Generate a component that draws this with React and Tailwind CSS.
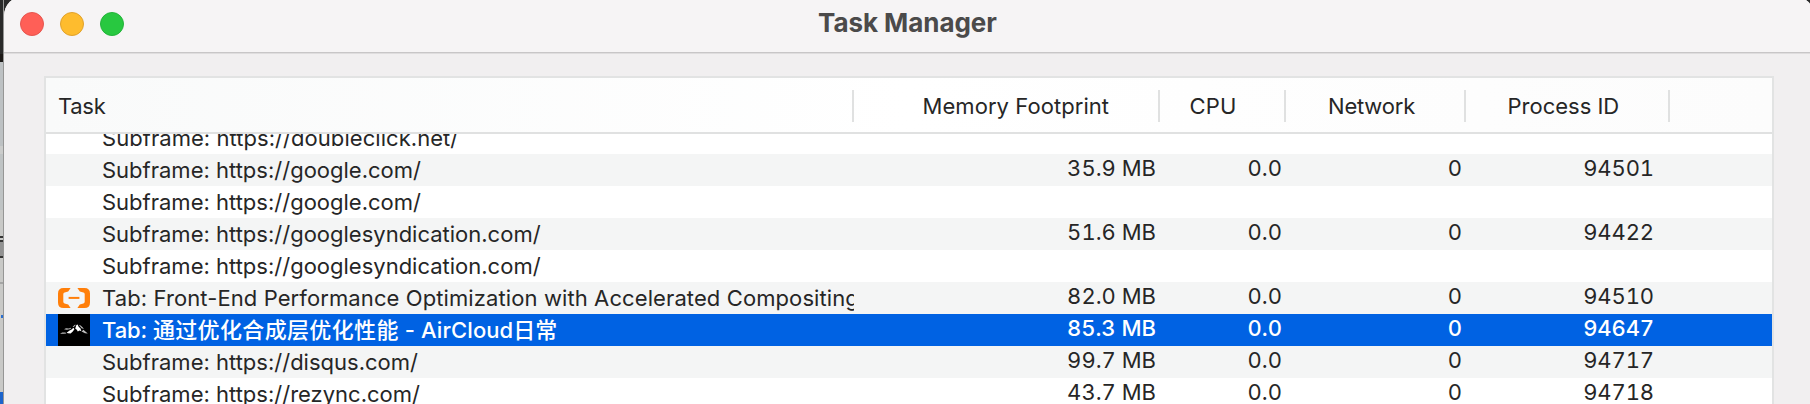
const COLUMNS = "grid grid-cols-[808px_306px_126px_180px_204px_1fr]";

const headers = [
  { label: "Task", className: "pl-[12px] tracking-[-0.3px]" },
  { label: "Memory Footprint", className: "pl-[68.5px] tracking-[0.06px]" },
  { label: "CPU", className: "pl-[29.5px] tracking-[0.2px]" },
  { label: "Network", className: "pl-[42px] tracking-[-0.2px]" },
  { label: "Process ID", className: "pl-[41.5px]" },
];

const rows = [
  { task: "Subframe: https://doubleclick.net/", tracking: "tracking-[0.05px]" },
  { task: "Subframe: https://google.com/", memory: "35.9 MB", pid: "94501" },
  { task: "Subframe: https://google.com/" },
  { task: "Subframe: https://googlesyndication.com/", memory: "51.6 MB", pid: "94422" },
  { task: "Subframe: https://googlesyndication.com/" },
  {
    task: "Tab: Front-End Performance Optimization with Accelerated Compositing",
    tracking: "tracking-[0.1px]",
    memory: "82.0 MB",
    pid: "94510",
    icon: "brackets",
  },
  {
    task: (
      <>
        Tab: <span className="tracking-[0.35px]">通过优化合成层优化性能</span>
        <span className="tracking-[0.1px]"> - AirCloud</span>日常
      </>
    ),
    tracking: "tracking-[-0.1px]",
    memory: "85.3 MB",
    pid: "94647",
    icon: "mountain",
    selected: true,
  },
  { task: "Subframe: https://disqus.com/", memory: "99.7 MB", pid: "94717" },
  { task: "Subframe: https://rezync.com/", memory: "43.7 MB", pid: "94718" },
];

function BracketsIcon() {
  return (
    <svg className="h-5 w-8" viewBox="0 0 32 20" fill="#ff7f0a">
      <path d="M5.5 0H12.6L10.2 3.4L6.6 4.5Q5.3 4.9 5.3 6.2V13.8Q5.3 15.1 6.6 15.5L10.2 16.6L12.6 20H5.5Q0 20 0 14.5V5.5Q0 0 5.5 0Z" />
      <path d="M26.5 0H19.4L21.8 3.4L25.4 4.5Q26.7 4.9 26.7 6.2V13.8Q26.7 15.1 25.4 15.5L21.8 16.6L19.4 20H26.5Q32 20 32 14.5V5.5Q32 0 26.5 0Z" />
      <rect x="10.6" y="8.9" width="10.8" height="2" />
    </svg>
  );
}

function MountainIcon() {
  return (
    <svg className="size-8 bg-black" viewBox="0 0 32 32">
      <path d="M8.6 18.8L11.6 16.4L13.6 15.4L15.4 13.8L16.4 15.2L14.8 17.6L12.6 19.4L10 19.2ZM17.2 14.4L18.4 11L19.6 10.4L20.8 13L22.4 14.2L23.4 17.2L21.6 16.6L19.8 17.6L18.8 15.8Z" fill="#fff" />
      <path d="M2 19.8L4.2 18.4L7.4 18.6L8.4 19.4L5.4 19.8ZM6 15.2L8 14.2L10.8 14.6L13 13.8L12.6 15L9 15.8ZM23.6 17.4L25.4 15.8L28 18L29.8 19.6L27 19.2ZM20.8 10.8L22.6 11.4L24.8 13.4L25.8 15L23.6 14.2ZM14.6 12.8L17.2 10.6L17.6 11.2L15.8 13Z" fill="#bdbdbd" />
    </svg>
  );
}

function TaskRow({ row, striped }) {
  const surface = row.selected
    ? "bg-[#0062e3] font-medium text-white"
    : striped
      ? "bg-[#f4f5f5] text-[#262626]"
      : "bg-white text-[#262626]";
  const number = "text-right leading-7 tabular-nums";
  return (
    <div className={`${COLUMNS} h-8 shrink-0 ${surface}`}>
      <div className="flex overflow-hidden pl-3">
        <div className="flex h-8 w-8 shrink-0 items-center">
          {row.icon === "brackets" && <BracketsIcon />}
          {row.icon === "mountain" && <MountainIcon />}
        </div>
        <div className={`ml-3 h-8 shrink-0 leading-8 whitespace-pre ${row.tracking ?? ""}`}>{row.task}</div>
      </div>
      <div className={`${number} pr-1`}>{row.memory}</div>
      <div className={`${number} pr-1`}>{row.memory && "0.0"}</div>
      <div className={`${number} pr-1`}>{row.memory && "0"}</div>
      <div className={`${number} pr-4 tracking-[-0.1px]`}>{row.pid}</div>
    </div>
  );
}

function DesktopEdge() {
  return (
    <div className="flex w-1 shrink-0 flex-col border-r border-black/25 bg-[#c9c9c7]">
      <div className="h-[54px] bg-[#2a2a2a]" />
      <div className="h-2 bg-[#1c1917]" />
      <div className="h-[84px] bg-[#bdc1c3]" />
      <div className="h-2 bg-[#cbcccb]" />
      <div className="h-14 bg-[#bfc3c4]" />
      <div className="h-[26px]" />
      <div className="h-0.5 bg-[#353535]" />
      <div className="h-0.5" />
      <div className="h-0.5 bg-[#353535]" />
      <div className="h-3.5 bg-[#929292]" />
      <div className="h-0.5 bg-[#353535]" />
      <div className="h-6" />
      <div className="h-0.5 bg-[#a5a5a5]" />
      <div className="h-[31px]" />
      <div className="ml-px h-[3px] bg-[#2b6fd0]" />
      <div className="h-[74px]" />
      <div className="h-3 bg-[#1c64cc]" />
    </div>
  );
}

export default function App() {
  return (
    <div className="flex h-[404px] w-[1810px] overflow-hidden bg-[#2a2a2a] font-['Inter','Noto_Sans_CJK_SC',sans-serif] text-[22px]">
      <DesktopEdge />
      <div className="-mt-1 flex h-[408px] w-[1810px] shrink-0 flex-col overflow-hidden rounded-t-[20px] bg-[#f1eff0]">
        <div className="flex h-[58px] shrink-0 border-b border-[#dfddde] bg-[#f6f4f5] pt-1">
          <div className="flex w-full border-b border-[#c8c6c7] pl-4">
            <div className="flex gap-4 pt-3">
              <div className="size-6 rounded-full border border-[#e5554f] bg-[#ff5f57]" />
              <div className="size-6 rounded-full border border-[#e0a12c] bg-[#febc2e]" />
              <div className="size-6 rounded-full border border-[#24b33a] bg-[#28c840]" />
            </div>
            <h1 className="ml-[694px] text-[26px] leading-[45px] font-bold tracking-[-0.05px] text-[#4b4a4a]">Task Manager</h1>
          </div>
        </div>
        <div className="mt-[22px] ml-10 flex w-[1730px] flex-1 flex-col overflow-hidden border-2 border-b-0 border-[#e2e3e3] bg-white">
          <div
            className={`${COLUMNS} h-14 shrink-0 border-b-2 border-[#e0e1e1] bg-linear-to-r from-[#f9fafa] via-white via-50% to-[#fcfcfc] text-[#262626]`}
          >
            {headers.map(({ label, className }) => (
              <div key={label} className="flex items-center justify-between">
                <div className={`leading-[56px] whitespace-nowrap ${className}`}>{label}</div>
                <div className="h-8 w-0.5 bg-[#e0e1e1]" />
              </div>
            ))}
          </div>
          <div className="flex min-h-0 flex-1 flex-col overflow-hidden">
            <div className="-mt-3 flex flex-col">
              {rows.map((row, index) => (
                <TaskRow key={index} row={row} striped={index % 2 === 1} />
              ))}
            </div>
          </div>
        </div>
      </div>
    </div>
  );
}
